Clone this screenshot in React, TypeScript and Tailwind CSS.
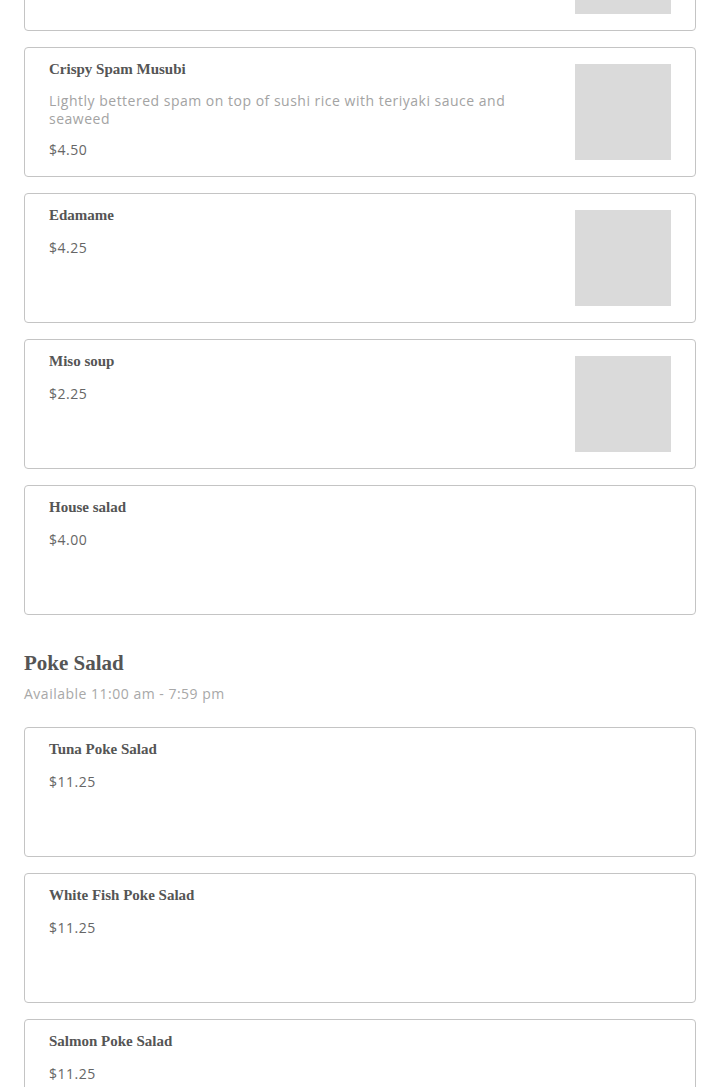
type Item = {
  name: string;
  price: string;
  description?: string;
  image?: boolean;
};

type Section = {
  title?: string;
  hours?: string;
  items: Item[];
};

const sections: Section[] = [
  {
    items: [
      {
        name: 'Crispy Spam Musubi',
        price: '$4.50',
        description: 'Lightly bettered spam on top of sushi rice with teriyaki sauce and seaweed',
        image: true,
      },
      { name: 'Edamame', price: '$4.25', image: true },
      { name: 'Miso soup', price: '$2.25', image: true },
      { name: 'House salad', price: '$4.00' },
    ],
  },
  {
    title: 'Poke Salad',
    hours: 'Available 11:00 am - 7:59 pm',
    items: [
      { name: 'Tuna Poke Salad', price: '$11.25' },
      { name: 'White Fish Poke Salad', price: '$11.25' },
      { name: 'Salmon Poke Salad', price: '$11.25' },
    ],
  },
];

const serif = "font-['Liberation_Serif',serif]";
const sans = "font-['Open_Sans',sans-serif] tracking-[0.5px]";

function MenuCard({ item }: { item: Item }) {
  return (
    <div className="flex min-h-[130px] gap-6 rounded border border-[#c4c4c4] bg-white px-6">
      <div className="flex-1 pt-[11px] pb-4">
        <div className={`${serif} text-[15px] leading-5 font-bold text-[#555]`}>{item.name}</div>
        {item.description && (
          <p className={`${sans} mt-[13px] text-[14px] leading-[18px] text-[#a3a3a3]`}>
            {item.description}
          </p>
        )}
        <div
          className={`${sans} ${item.description ? 'mt-3' : 'mt-[13px]'} text-[14px] leading-5 text-[#666]`}
        >
          {item.price}
        </div>
      </div>
      {item.image && <div className="mt-4 h-24 w-24 shrink-0 bg-[#dadada]" />}
    </div>
  );
}

export default function App() {
  return (
    <div className="h-[1087px] overflow-hidden bg-white">
      <div className="-mt-[99px] px-6">
        {/* tail of the card scrolled above the fold */}
        <div className="mb-4 flex h-[130px] justify-end rounded border border-[#c4c4c4] bg-white px-6">
          <div className="mt-4 h-24 w-24 bg-[#dadada]" />
        </div>
        {sections.map((section, i) => (
          <div key={i} className={i > 0 ? 'mt-8' : ''}>
            {section.title && (
              <div className="mb-[23px]">
                <h2 className={`${serif} text-[21px] leading-8 font-bold text-[#555]`}>
                  {section.title}
                </h2>
                <div className={`${sans} mt-[5px] text-[14px] leading-5 text-[#a8a8a8]`}>
                  {section.hours}
                </div>
              </div>
            )}
            <div className="flex flex-col gap-4">
              {section.items.map((item) => (
                <MenuCard key={item.name} item={item} />
              ))}
            </div>
          </div>
        ))}
      </div>
    </div>
  );
}
